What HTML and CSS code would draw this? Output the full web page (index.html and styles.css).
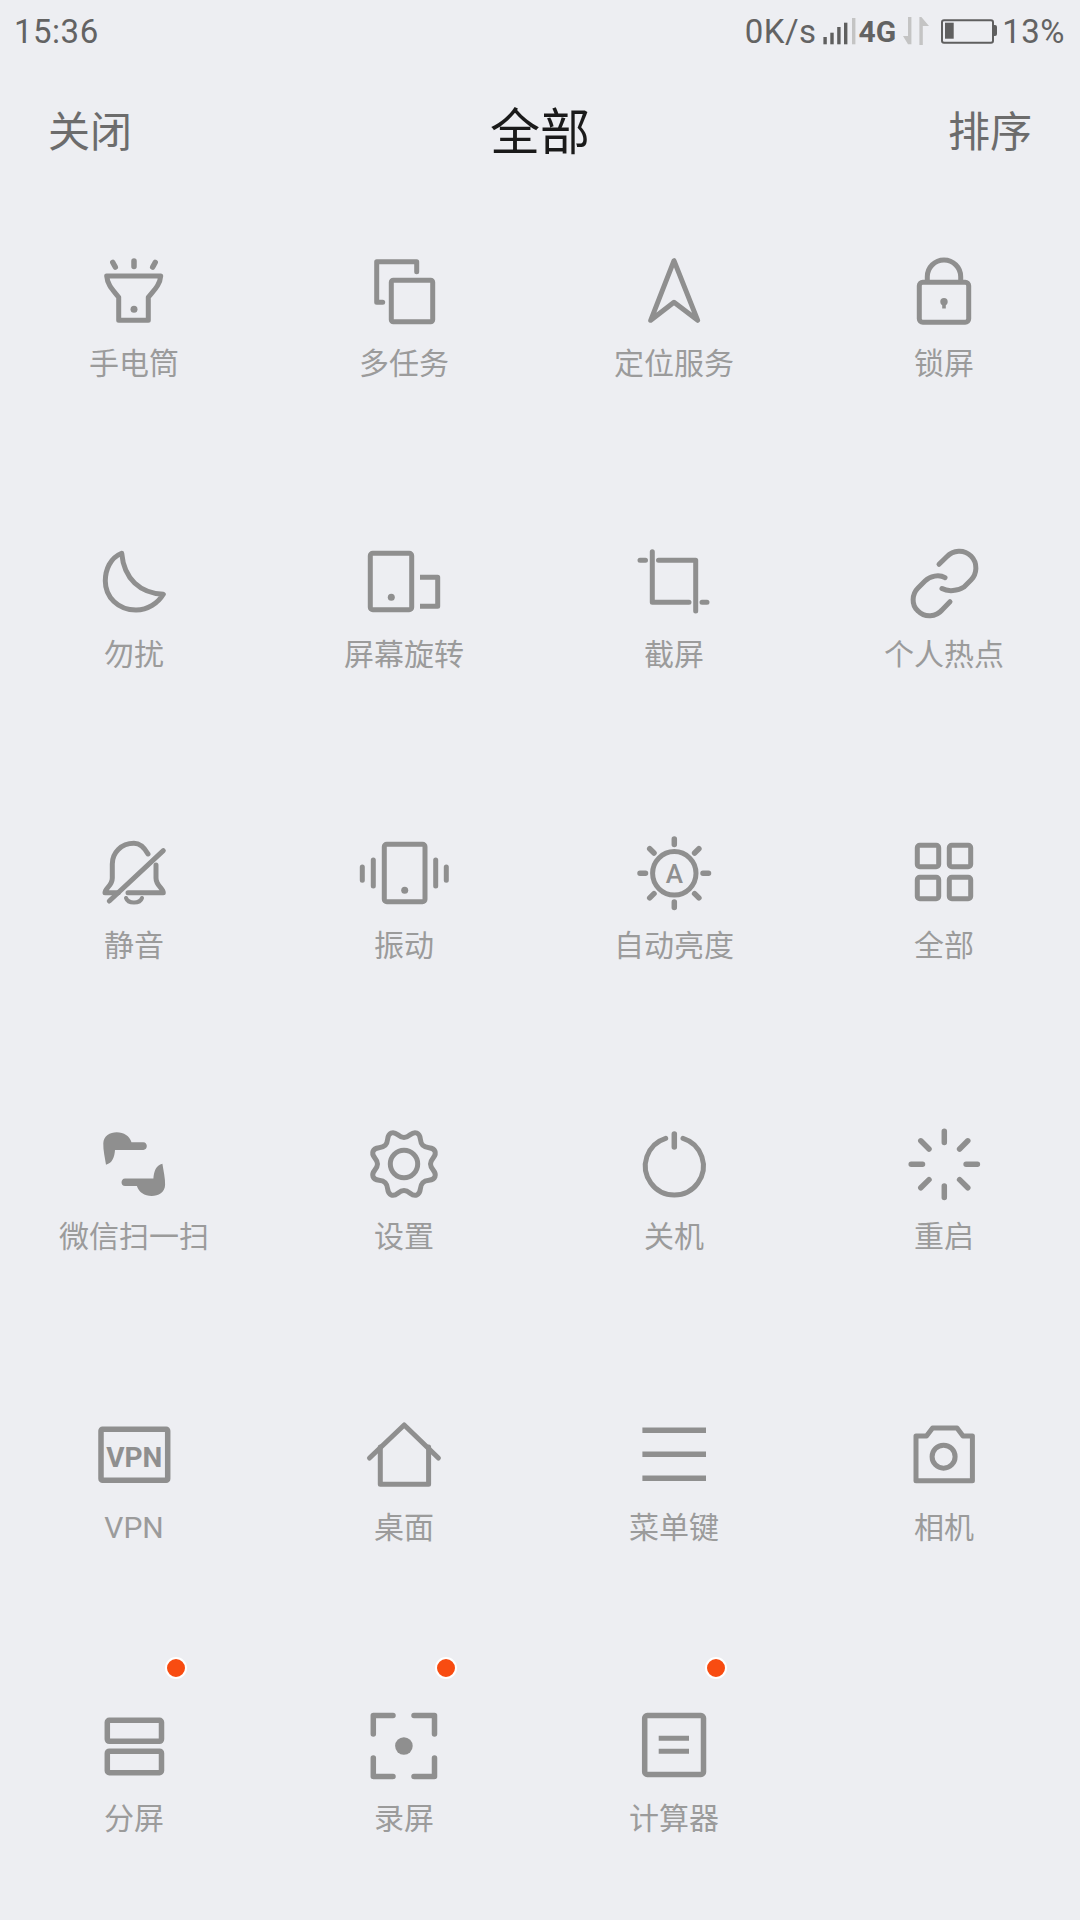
FILE: index.html
```html
<!DOCTYPE html>
<html lang="zh-CN">
<head>
  <meta charset="UTF-8" />
  <title>全部</title>
  <link rel="stylesheet" href="styles.css">
</head>
<body>
  <div class="status">
    <span class="time">15:36</span>
    <div class="status-right">
      <span>0K/s</span>
      <svg class="signal" width="34" height="30" viewBox="0 0 34 30">
        <rect x="0.4" y="21" width="3.4" height="7.3" />
        <rect x="7.3" y="16.7" width="3.4" height="11.6" />
        <rect x="14.2" y="11" width="3.4" height="17.3" />
        <rect x="21" y="6.7" width="3.4" height="21.6" />
        <rect class="dim" x="29" y="2" width="3.4" height="26.3" />
      </svg>
      <span class="net">4G</span>
      <svg class="arrows" width="26" height="30" viewBox="0 0 26 30">
        <path class="dim" d="M5 1h3.4v27.3H5L0 20h5z" />
        <path class="dim" d="M16.4 1h2L26 10h-6.2v19h-3.4z" />
      </svg>
      <svg class="battery" width="57" height="30" viewBox="0 0 57 30">
        <rect class="shell" x="2" y="4.3" width="51" height="22.4" rx="2" />
        <rect x="5" y="6.7" width="8.7" height="16" />
        <path d="M53.5 9H55a2 2 0 0 1 2 2v7a2 2 0 0 1-2 2h-1.500z" />
      </svg>
      <span class="pct">13%</span>
    </div>
  </div>

  <div class="header">
    <span>关闭</span>
    <span class="title">全部</span>
    <span>排序</span>
  </div>

  <div class="grid">
    <div class="cell">
      <svg class="icon" width="80" height="80" viewBox="0 0 80 80">
        <path d="M12.700 24H66.700C66 33 60 38 54.300 45.300V68.300H24.700V45.300C19 38 13.400 33 12.700 24Z" />
        <circle class="fill" cx="40" cy="57.300" r="3.500" />
        <path class="ray" d="M40 9V14.500M18.800 10.500L21.300 15M61.200 10.500L58.700 15" />
      </svg>
      <span class="label">手电筒</span>
    </div>
    <div class="cell">
      <svg class="icon" width="80" height="80" viewBox="0 0 80 80">
        <rect x="27.300" y="28.300" width="41.400" height="41.400" rx="2" />
        <path d="M52.700 19.700V9.700H12.700V50.300H18.700" />
      </svg>
      <span class="label">多任务</span>
    </div>
    <div class="cell">
      <svg class="icon" width="80" height="80" viewBox="0 0 80 80">
        <path d="M40 8.700L16.700 68.300L40 50.300L63.700 68.300Z" />
      </svg>
      <span class="label">定位服务</span>
    </div>
    <div class="cell">
      <svg class="icon" width="80" height="80" viewBox="0 0 80 80">
        <rect x="15.300" y="30.300" width="49.400" height="40" rx="3.500" />
        <path d="M23.300 29V24.700a16.700 16.700 0 0 1 33.400 0V29" />
        <circle class="fill" cx="40" cy="49.700" r="3.700" />
        <rect class="fill" x="38.200" y="50" width="3.600" height="6.500" />
      </svg>
      <span class="label">锁屏</span>
    </div>

    <div class="cell">
      <svg class="icon" width="80" height="80" viewBox="0 0 80 80">
        <path d="M27.700 10.300C16 15 11.300 27 11.300 38C11.300 54 24 67 42 67C54 67 64 60 69.300 51.300C46 50 30 36 27.700 10.300Z" />
      </svg>
      <span class="label">勿扰</span>
    </div>
    <div class="cell">
      <svg class="icon" width="80" height="80" viewBox="0 0 80 80">
        <rect x="6.300" y="10.300" width="41.400" height="56.400" rx="2.500" />
        <circle class="fill" cx="27.300" cy="54.300" r="3.500" />
        <path class="flat" d="M56 34.300H73.700V63.300H56" />
      </svg>
      <span class="label">屏幕旋转</span>
    </div>
    <div class="cell">
      <svg class="icon" width="80" height="80" viewBox="0 0 80 80">
        <path d="M18.300 8.700V59.300H55M24.500 17.300H61.700V68M6 17.300H11.500M68 59.300H73" />
      </svg>
      <span class="label">截屏</span>
    </div>
    <div class="cell">
      <svg class="icon" width="80" height="80" viewBox="0 0 80 80">
        <path d="M35 21.300L43 13.500C49 7 60 6 67 13C74 20 73 31 67 37L60 44C54 48 44 49 38 45.500" />
        <path d="M41 34.700C35 31 26 33 21 38L14 45C8 51 7 62 14 68C21 75 32 74 38 67L46 58.700" />
      </svg>
      <span class="label">个人热点</span>
    </div>

    <div class="cell">
      <svg class="icon" width="80" height="80" viewBox="0 0 80 80">
        <path d="M54 20C50 13 46 9.300 40 9.300C27 9.300 18.300 19 18.300 30V44C18.300 52 11 54 11 58.700H24.200" />
        <path d="M62 31V44C62 52 69.300 54 69.300 58.700H34" />
        <path d="M15.300 67L69.300 16.700" />
        <path class="thin" d="M32 64C34 70 46 70 48 64" />
      </svg>
      <span class="label">静音</span>
    </div>
    <div class="cell">
      <svg class="icon" width="80" height="80" viewBox="0 0 80 80">
        <rect x="20.300" y="10.300" width="40.700" height="57.400" rx="2.500" />
        <circle class="fill" cx="40.700" cy="56.300" r="3.500" />
        <path d="M-1.700 33V46.300M9.300 26V52M71.700 26V52M82.300 33V46.300" />
      </svg>
      <span class="label">振动</span>
    </div>
    <div class="cell">
      <svg class="icon" width="80" height="80" viewBox="0 0 80 80">
        <circle cx="40.300" cy="39.300" r="21.700" />
        <text class="glyph" x="40.300" y="48.500" font-size="26">A</text>
        <path class="ray" d="M40.300 5V10.500M40.300 68V73.500M6 39.300H11.500M69 39.300H74.500M15.700 14.700L20 19M60.600 59.600L64.900 63.900M15.700 63.900L20 59.600M60.600 19L64.900 14.700" />
      </svg>
      <span class="label">自动亮度</span>
    </div>
    <div class="cell">
      <svg class="icon" width="80" height="80" viewBox="0 0 80 80">
        <rect x="13.300" y="11.300" width="21.400" height="21.400" rx="2.500" />
        <rect x="45.300" y="11.300" width="21.400" height="21.400" rx="2.500" />
        <rect x="13.300" y="43.300" width="21.400" height="21.400" rx="2.500" />
        <rect x="45.300" y="43.300" width="21.400" height="21.400" rx="2.500" />
      </svg>
      <span class="label">全部</span>
    </div>

    <div class="cell">
      <svg class="icon" width="80" height="80" viewBox="0 0 80 80">
        <path class="fill" d="M9.300 18.300C9.500 11 16 7.300 22.700 7.300C30 7.300 35.500 11 37.500 17.300H49.300C54 17.300 54 25 49.300 25H21C20.500 32 18.500 38 12 39.700C11 33 9 25 9.300 18.300Z" />
        <path class="fill" transform="rotate(180 40.200 39.200)" d="M9.300 18.300C9.500 11 16 7.300 22.700 7.300C30 7.300 35.500 11 37.500 17.300H49.300C54 17.300 54 25 49.300 25H21C20.500 32 18.500 38 12 39.700C11 33 9 25 9.300 18.300Z" />
      </svg>
      <span class="label">微信扫一扫</span>
    </div>
    <div class="cell">
      <svg class="icon" width="80" height="80" viewBox="0 0 80 80">
        <path d="M40 12.500C46 12.500 47.280 5.750 52.820 8.050C58.360 10.350 54.500 16.020 58.740 20.260C62.980 24.500 68.650 20.640 70.950 26.180C73.250 31.720 66.500 33 66.500 39C66.500 45 73.250 46.280 70.950 51.820C68.650 57.360 62.980 53.500 58.740 57.740C54.500 61.980 58.360 67.650 52.820 69.950C47.280 72.250 46 65.500 40 65.500C34 65.500 32.720 72.250 27.180 69.950C21.640 67.650 25.500 61.980 21.260 57.740C17.020 53.500 11.350 57.360 9.050 51.820C6.750 46.280 13.500 45 13.500 39C13.500 33 6.750 31.720 9.050 26.180C11.350 20.640 17.020 24.500 21.260 20.260C25.500 16.020 21.640 10.350 27.180 8.050C32.720 5.750 34 12.500 40 12.500Z" />
        <circle cx="40" cy="39" r="13.700" />
      </svg>
      <span class="label">设置</span>
    </div>
    <div class="cell">
      <svg class="icon" width="80" height="80" viewBox="0 0 80 80">
        <path d="M31.700 13.300A29 29 0 1 0 49 13.300" />
        <path class="ray" d="M40.300 9V22" />
      </svg>
      <span class="label">关机</span>
    </div>
    <div class="cell">
      <svg class="icon" width="80" height="80" viewBox="0 0 80 80">
        <path class="ray" d="M40.300 6.200V17.500M40.300 61.100V72.400M7.200 39.300H18.500M62.100 39.300H73.400M16.800 15.800L25 24M55.600 54.600L63.800 62.800M16.800 62.800L25 54.600M55.600 24L63.800 15.800" />
      </svg>
      <span class="label">重启</span>
    </div>

    <div class="cell">
      <svg class="icon" width="80" height="80" viewBox="0 0 80 80">
        <rect class="thick" x="7" y="13.200" width="66.700" height="51" rx="1.500" />
        <text class="glyph vpn" x="40.300" y="50.500" font-size="28">VPN</text>
      </svg>
      <span class="label">VPN</span>
    </div>
    <div class="cell">
      <svg class="icon" width="80" height="80" viewBox="0 0 80 80">
        <path d="M5.500 42L40.200 9L74.400 42" />
        <path d="M16.300 31V68.300H64.600V31" />
      </svg>
      <span class="label">桌面</span>
    </div>
    <div class="cell">
      <svg class="icon" width="80" height="80" viewBox="0 0 80 80">
        <path class="flat thick" d="M8.400 14.300H72M8.400 38.300H72M8.400 62.300H72" />
      </svg>
      <span class="label">菜单键</span>
    </div>
    <div class="cell">
      <svg class="icon" width="80" height="80" viewBox="0 0 80 80">
        <path d="M12 20H22.500L28.600 12H53L59 20H68.400V64.700H12Z" />
        <circle cx="39.600" cy="40.700" r="11.500" />
      </svg>
      <span class="label">相机</span>
    </div>

    <div class="cell">
      <i class="dot"></i>
      <svg class="icon" width="80" height="80" viewBox="0 0 80 80">
        <rect class="thick" x="13.300" y="13.300" width="54.200" height="21" rx="2" />
        <rect class="thick" x="13.300" y="44.200" width="54.200" height="21.500" rx="2" />
      </svg>
      <span class="label">分屏</span>
    </div>
    <div class="cell">
      <i class="dot"></i>
      <svg class="icon" width="80" height="80" viewBox="0 0 80 80">
        <path class="thick" d="M9.300 27V8.600H29M50 8.600H70.500V27M9.300 51V69.400H29M50 69.400H70.500V51" />
        <circle class="fill" cx="39.900" cy="39" r="8.800" />
      </svg>
      <span class="label">录屏</span>
    </div>
    <div class="cell">
      <i class="dot"></i>
      <svg class="icon" width="80" height="80" viewBox="0 0 80 80">
        <rect class="thick" x="10.700" y="8.600" width="58.800" height="58.800" rx="2.500" />
        <path class="flat" d="M24.700 31.300H55M24.700 44.300H55" />
      </svg>
      <span class="label">计算器</span>
    </div>
  </div>
</body>
</html>
```

FILE: styles.css
```css
body {
  margin: 0;
  background: #edeef2;
  font-family: Roboto, "Noto Sans CJK SC", sans-serif;
}

.status {
  display: flex;
  justify-content: space-between;
  align-items: center;
  height: 60px;
  padding: 2px 15px 0 14px;
  box-sizing: border-box;
  font-size: 33px;
  letter-spacing: 0.5px;
  color: #636363;
}
.status-right {
  display: flex;
  align-items: center;
}
.status-right svg {
  fill: #5f5f5f;
}
.status-right .dim {
  fill: #c4c4c4;
}
.status-right .shell {
  fill: none;
  stroke: #5f5f5f;
  stroke-width: 2;
}
.signal { margin-left: 6px; }
.net {
  margin-left: 2px;
  font-size: 30px;
  font-weight: 700;
  letter-spacing: 0;
}
.arrows { margin-left: 7px; }
.battery { margin-left: 11px; }
.pct { margin-left: 5px; }

.header {
  display: flex;
  justify-content: space-between;
  align-items: center;
  height: 136px;
  padding: 0 48px;
  font-size: 42px;
  color: #6c6c6c;
}
.title {
  font-size: 50px;
  color: #1a1a1a;
}

.grid {
  display: grid;
  grid-template-columns: repeat(4, 270px);
  row-gap: 159px;
  margin-left: -1px;
  padding-top: 56px;
}
.cell {
  position: relative;
  display: flex;
  flex-direction: column;
  align-items: center;
}
.label {
  margin-top: 12px;
  font-size: 30px;
  line-height: 40px;
  color: #9b9b9b;
}

.icon {
  overflow: visible;
  fill: none;
  stroke: #8f8f8f;
  stroke-width: 5;
  stroke-linecap: round;
  stroke-linejoin: round;
}
.icon .fill {
  fill: #8f8f8f;
  stroke: none;
}
.icon .ray { stroke-width: 5.5; }
.icon .thick { stroke-width: 5.500; }
.icon .thin { stroke-width: 4; }
.icon .flat { stroke-linecap: butt; }
.icon .glyph {
  fill: #8f8f8f;
  stroke: none;
  font-weight: 500;
  text-anchor: middle;
}
.icon .vpn { font-weight: 700; }

.dot {
  position: absolute;
  top: -50px;
  left: calc(50% + 31px);
  width: 18px;
  height: 18px;
  border: 2px solid #fff;
  border-radius: 50%;
  background: #f84c11;
}
```
